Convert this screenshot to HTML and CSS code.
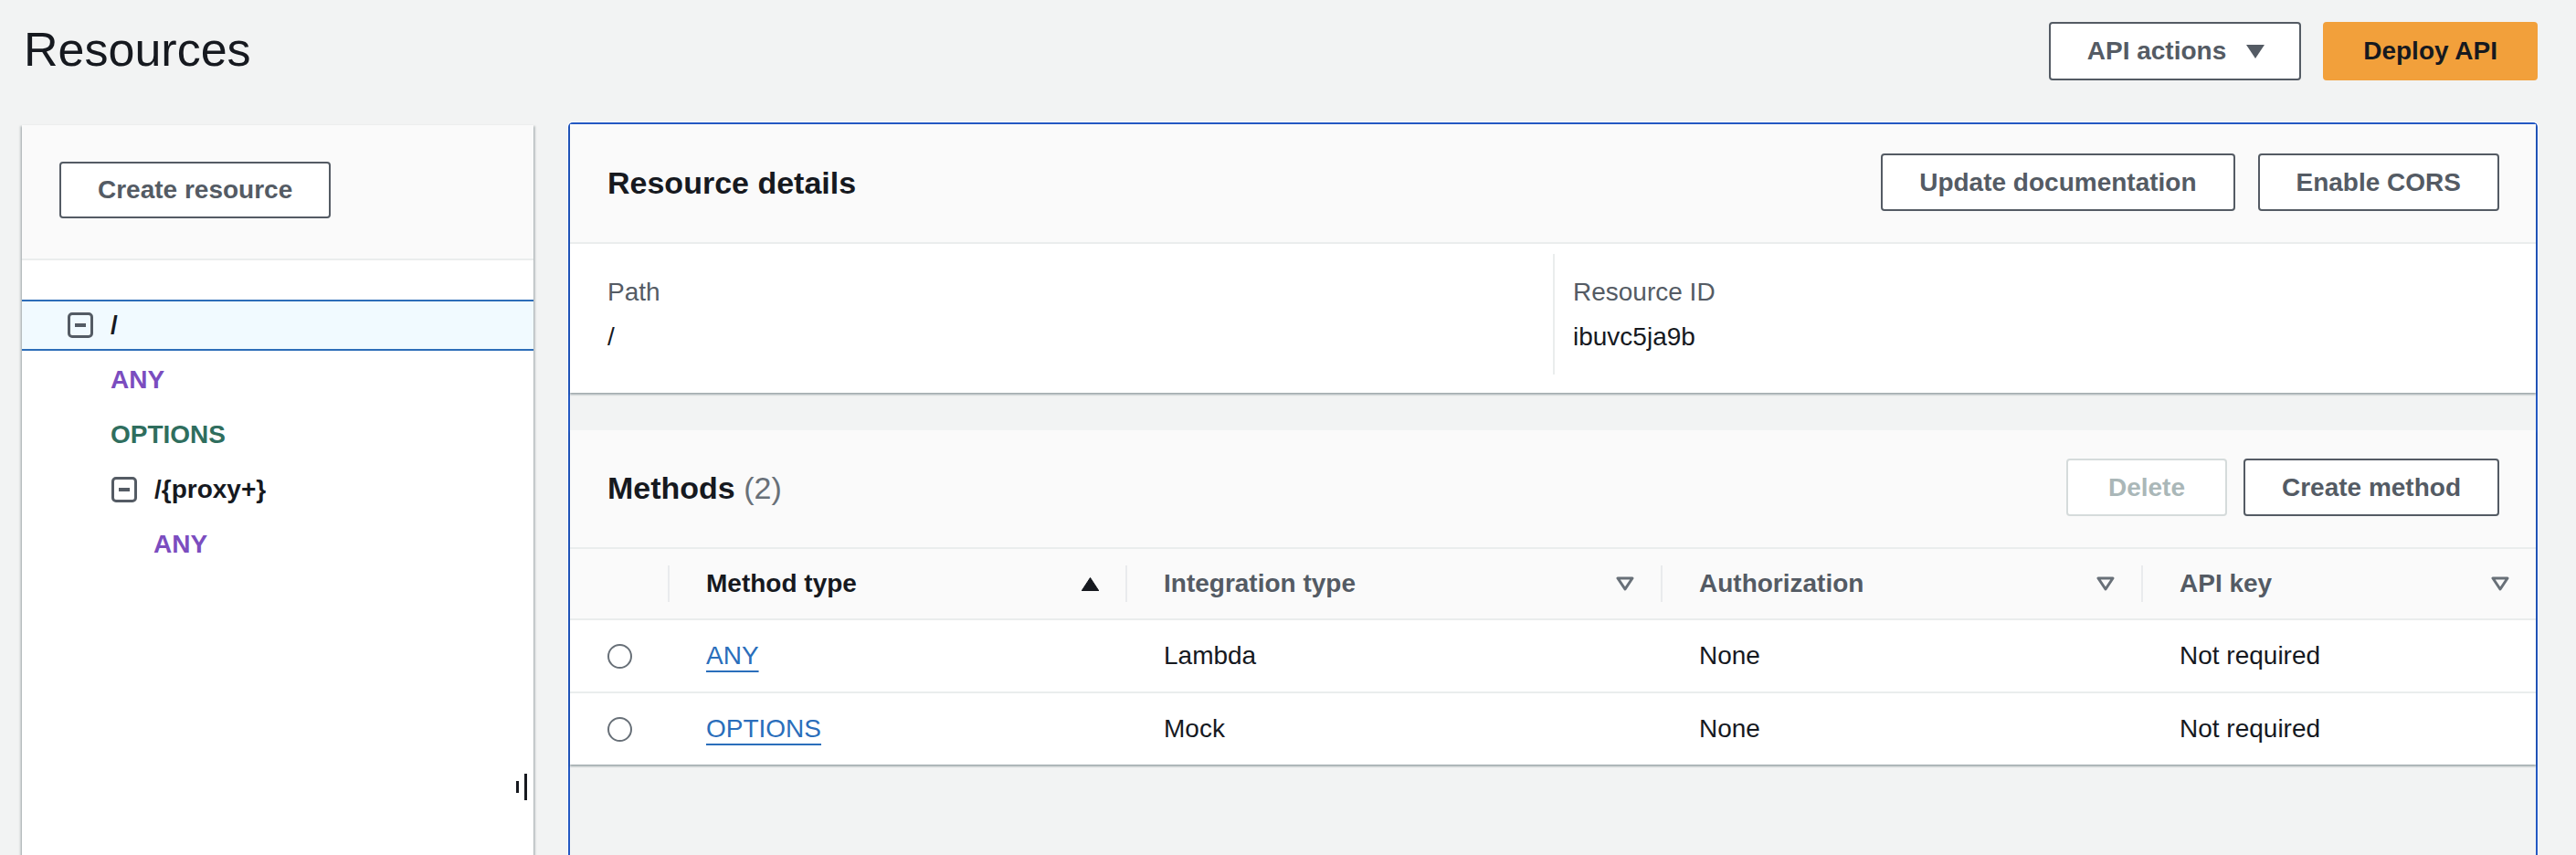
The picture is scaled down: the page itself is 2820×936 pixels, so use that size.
FILE: index.html
```html
<!DOCTYPE html>
<html lang="en">
<head>
<meta charset="utf-8">
<title>Resources</title>
<link rel="stylesheet" href="styles.css">
</head>
<body>
<div class="page">
  <header class="page-header">
    <h1 class="page-title">Resources</h1>
    <div class="page-actions">
      <button class="btn btn-dropdown">API actions
        <svg class="caret" width="20" height="15" viewBox="0 0 20 15"><polygon points="0,0 20,0 10,15" fill="#545b64"/></svg>
      </button>
      <button class="btn btn-primary">Deploy API</button>
    </div>
  </header>

  <div class="layout">
    <aside class="tree-panel">
      <div class="tree-head">
        <button class="btn btn-md">Create resource</button>
      </div>
      <ul class="tree">
        <li class="node lvl0 selected">
          <svg class="toggle" width="28" height="28" viewBox="0 0 28 28"><rect x="1.5" y="1.5" width="25" height="25" rx="3.5" fill="none" stroke="#545b64" stroke-width="3"/><rect x="8" y="12" width="12" height="4" fill="#545b64"/></svg>
          <span>/</span>
        </li>
        <li class="method lvl0 m-any">ANY</li>
        <li class="method lvl0 m-options">OPTIONS</li>
        <li class="node lvl1">
          <svg class="toggle" width="28" height="28" viewBox="0 0 28 28"><rect x="1.5" y="1.5" width="25" height="25" rx="3.5" fill="none" stroke="#545b64" stroke-width="3"/><rect x="8" y="12" width="12" height="4" fill="#545b64"/></svg>
          <span>/{proxy+}</span>
        </li>
        <li class="method lvl1 m-any">ANY</li>
      </ul>
      <div class="resize-handle"><span class="bar-short"></span><span class="bar-long"></span></div>
    </aside>

    <main class="detail-panel">
      <section class="card">
        <div class="card-header">
          <h2 class="card-title">Resource details</h2>
          <div class="card-actions wide">
            <button class="btn btn-md">Update documentation</button>
            <button class="btn btn-md">Enable CORS</button>
          </div>
        </div>
        <div class="details">
          <div class="detail-col">
            <div class="detail-label">Path</div>
            <div class="detail-value">/</div>
          </div>
          <div class="detail-col divided">
            <div class="detail-label">Resource ID</div>
            <div class="detail-value">ibuvc5ja9b</div>
          </div>
        </div>
      </section>

      <section class="card">
        <div class="card-header">
          <h2 class="card-title">Methods <span class="count">(2)</span></h2>
          <div class="card-actions">
            <button class="btn btn-md btn-disabled">Delete</button>
            <button class="btn btn-md">Create method</button>
          </div>
        </div>
        <div class="table">
          <div class="thead">
            <div class="th th-select"></div>
            <div class="th sorted"><span>Method type</span>
              <svg width="19" height="15" viewBox="0 0 19 15"><polygon points="9.5,0.5 19,15 0,15" fill="#16191f" stroke="#16191f" stroke-linejoin="round"/></svg>
            </div>
            <div class="th"><span>Integration type</span>
              <svg width="20" height="16" viewBox="0 0 20 16"><polygon points="2,2 18,2 10,14" fill="none" stroke="#687078" stroke-width="3" stroke-linejoin="round"/></svg>
            </div>
            <div class="th"><span>Authorization</span>
              <svg width="20" height="16" viewBox="0 0 20 16"><polygon points="2,2 18,2 10,14" fill="none" stroke="#687078" stroke-width="3" stroke-linejoin="round"/></svg>
            </div>
            <div class="th"><span>API key</span>
              <svg width="20" height="16" viewBox="0 0 20 16"><polygon points="2,2 18,2 10,14" fill="none" stroke="#687078" stroke-width="3" stroke-linejoin="round"/></svg>
            </div>
          </div>
          <div class="tr">
            <div class="td td-select"><span class="radio"></span></div>
            <div class="td"><a class="link" href="#">ANY</a></div>
            <div class="td">Lambda</div>
            <div class="td">None</div>
            <div class="td">Not required</div>
          </div>
          <div class="tr last">
            <div class="td td-select"><span class="radio"></span></div>
            <div class="td"><a class="link" href="#">OPTIONS</a></div>
            <div class="td">Mock</div>
            <div class="td">None</div>
            <div class="td">Not required</div>
          </div>
        </div>
      </section>
    </main>
  </div>
</div>
</body>
</html>
```

FILE: styles.css
```css
* {
  box-sizing: border-box;
}

html, body {
  margin: 0;
  height: 936px;
  overflow: hidden;
}

body {
  background: #f2f3f3;
  color: #16191f;
  font-family: "Liberation Sans", Arial, sans-serif;
  font-size: 28px;
}

.page {
  padding: 0 42px 0 24px;
}

/* ---------- header ---------- */
.page-header {
  display: flex;
  justify-content: space-between;
  align-items: flex-start;
  height: 134px;
  padding-top: 24px;
}

.page-title {
  margin: 0;
  padding-left: 2px;
  font-size: 52px;
  line-height: 60px;
  font-weight: 400;
  color: #16191f;
}

.page-actions {
  display: flex;
  gap: 24px;
}

/* ---------- buttons ---------- */
.btn {
  display: inline-flex;
  align-items: center;
  justify-content: center;
  height: 64px;
  padding: 0 40px;
  border: 2px solid #545b64;
  border-radius: 4px;
  background: #fff;
  color: #545b64;
  font-family: "Liberation Sans", Arial, sans-serif;
  font-size: 28px;
  font-weight: 700;
  line-height: 1;
  white-space: nowrap;
}

.btn-md {
  height: 63px;
}

.btn-dropdown {
  gap: 22px;
  padding-right: 38px;
}

.btn-primary {
  background: #f2a03b;
  border-color: #f2a03b;
  color: #16191f;
  padding: 0 42px;
}

.btn-disabled {
  border-color: #d5dbdb;
  color: #aab7b8;
  padding: 0 44px;
}

/* ---------- layout ---------- */
.layout {
  display: flex;
  gap: 38px;
  height: 840px;
}

/* ---------- resource tree ---------- */
.tree-panel {
  position: relative;
  width: 560px;
  flex: none;
  margin-top: 3px;
  background: #fff;
  box-shadow: 0 2px 2px rgba(0, 28, 36, 0.3), 2px 1px 2px rgba(0, 28, 36, 0.18), -2px 1px 2px rgba(0, 28, 36, 0.18);
}

.tree-head {
  background: #fafafa;
  padding: 40px 41px 44px;
  border-bottom: 2px solid #eaeded;
}

.tree-head .btn {
  height: 62px;
}

.tree {
  list-style: none;
  margin: 0;
  padding: 43px 0 0;
}

.tree li {
  display: flex;
  align-items: center;
  gap: 19px;
  height: 60px;
  font-size: 28px;
  font-weight: 700;
  color: #16191f;
}

.tree li.selected {
  box-sizing: content-box;
  height: 52px;
  margin-bottom: 2px;
  background: #f1faff;
  border-top: 2px solid #2d6db8;
  border-bottom: 2px solid #2d6db8;
}

.toggle {
  flex: none;
}

.tree .node.lvl0 { padding-left: 50px; }
.tree .node.lvl1 { padding-left: 98px; }
.tree .method.lvl0 { padding-left: 97px; }
.tree .method.lvl1 { padding-left: 144px; }

.tree .m-any { color: #7b4dbf; }
.tree .m-options { color: #2f6e5e; }

.resize-handle {
  position: absolute;
  right: 7px;
  top: 710px;
  display: flex;
  align-items: center;
  gap: 6px;
}

.bar-short {
  width: 3px;
  height: 13px;
  background: #16191f;
}

.bar-long {
  width: 3px;
  height: 29px;
  background: #16191f;
}

/* ---------- detail panel ---------- */
.detail-panel {
  flex: 1;
  display: flex;
  flex-direction: column;
  gap: 41px;
  border: 2px solid #2358c2;
  border-bottom: none;
  border-radius: 5px 5px 0 0;
  box-shadow: 0 0 0 1px #fff;
  background: #f2f3f3;
}

.card {
  background: #fff;
  box-shadow: 0 2px 2px rgba(0, 28, 36, 0.35);
}

.card-header {
  display: flex;
  justify-content: space-between;
  align-items: center;
  background: #fafafa;
  padding: 32px 40px 34px 41px;
  border-bottom: 2px solid #eaeded;
}

.card:last-child .card-header {
  padding-top: 31px;
}

.card-title {
  margin: 0;
  font-size: 34px;
  line-height: 40px;
  font-weight: 700;
  color: #16191f;
}

.count {
  font-weight: 400;
  color: #687078;
}

.card-actions {
  display: flex;
  gap: 18px;
}

.card-actions.wide {
  gap: 25px;
}

/* details */
.details {
  display: grid;
  grid-template-columns: 1fr 1fr;
  padding: 11px 41px 20px;
}

.detail-col {
  padding: 22px 20px 21px 0;
}

.detail-col.divided {
  border-left: 2px solid #eaeded;
  padding-left: 20px;
}

.detail-label {
  line-height: 40px;
  color: #545b64;
  margin-bottom: 9px;
}

.detail-value {
  line-height: 40px;
  color: #16191f;
}

/* table */
.thead,
.tr {
  display: grid;
  grid-template-columns: 107px 501px 586px 526px 1fr;
  align-items: center;
}

.thead {
  height: 78px;
  background: #fafafa;
  border-bottom: 2px solid #eaeded;
}

.th {
  display: flex;
  justify-content: space-between;
  align-items: center;
  height: 40px;
  padding: 0 29px 0 40px;
  border-left: 2px solid #e9ebed;
  font-weight: 700;
  color: #545b64;
}

.th.sorted {
  color: #16191f;
}

.th-select {
  border-left: none;
}

.tr {
  height: 80px;
  border-bottom: 2px solid #eaeded;
}

.tr.last {
  height: 78px;
  border-bottom: none;
}

.td {
  padding-left: 42px;
  color: #16191f;
  line-height: 40px;
}

.td-select {
  display: flex;
  align-items: center;
  padding-left: 41px;
}

.radio {
  display: block;
  width: 27px;
  height: 27px;
  border: 2px solid #687078;
  border-radius: 50%;
}

.link {
  color: #2a6ebb;
  text-decoration: underline;
  text-decoration-thickness: 2px;
  text-underline-offset: 7px;
}
```
